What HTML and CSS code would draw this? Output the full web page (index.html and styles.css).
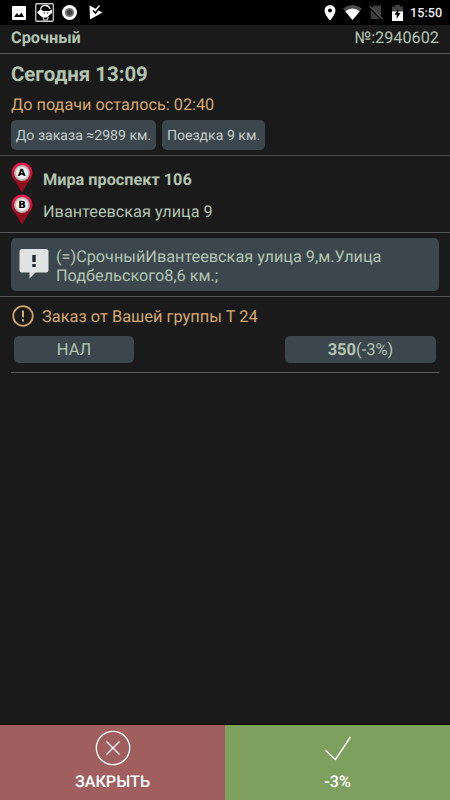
FILE: index.html
```html
<!DOCTYPE html>
<html lang="ru">
<head>
    <meta charset="UTF-8">
    <meta name="viewport" content="width=device-width, initial-scale=1.0">
    <title>Заказ</title>

    <link rel="stylesheet" href="styles.css">
</head>
<body>
    <div class="screen">
        <div class="status-bar">
            <div class="status-left">
                <svg class="icon-image" width="14" height="14" viewBox="0 0 14 14">
                    <rect width="14" height="14" rx="1" fill="#fff"/>
                    <path d="M2 11 L5 7 L7 9.500 L9.500 6.500 L12 11 Z" fill="#000"/>
                </svg>
                <svg class="icon-app" width="19" height="19" viewBox="0 0 19 19">
                    <rect x=".75" y=".75" width="17.500" height="17.500" rx="1" fill="#000" stroke="#ccc" stroke-width="1.300"/>
                    <path d="M2 9.500 L5.500 6 L8 8 H14 L17 6.500 V10 L14.500 12 L12 14.500 L8 14.500 L5.500 13 Z" fill="#fff"/>
                    <path d="M5.500 6 Q7 2 11 2.500 Q14.500 3 15 6" fill="none" stroke="#fff" stroke-width="1.300"/>
                    <path d="M8 14 L9 17 H12 L13.500 14" fill="none" stroke="#ddd" stroke-width="1.200"/>
                    <path d="M8 9.500 L10 9.500 L10 11 Z M12 9.500 H14 L12 11 Z" fill="#222"/>
                </svg>
                <svg class="icon-record" width="15" height="15" viewBox="0 0 15 15">
                    <circle cx="7.500" cy="7.500" r="7.500" fill="#fff"/>
                    <circle cx="7.500" cy="7.500" r="4.600" fill="#777"/>
                    <circle cx="7.500" cy="7.500" r="2.800" fill="#444"/>
                </svg>
                <svg class="icon-play" width="14" height="15" viewBox="0 0 14 15">
                    <path d="M.5 .5 L13.500 7.500 L1 14.500 Z" fill="#fff"/>
                    <path d="M4 5.500 L6.500 8 L11 2" fill="none" stroke="#000" stroke-width="1.500"/>
                    <path d="M7 4.500 L10.500 .5" stroke="#fff" stroke-width="1.300"/>
                </svg>
            </div>
            <div class="status-right">
                <svg class="icon-place" width="12" height="16" viewBox="0 0 12 16">
                    <path d="M6 0 A5.500 5.500 0 0 0 .5 5.500 C.5 9.500 6 15.500 6 15.500 S11.500 9.500 11.500 5.500 A5.500 5.500 0 0 0 6 0 Z M6 3.600 A2 2 0 1 1 6 7.600 A2 2 0 1 1 6 3.600 Z" fill="#fff"/>
                </svg>
                <svg class="icon-wifi" width="19" height="15" viewBox="0 0 19 15">
                    <path d="M9.500 15 L0 3.500 Q9.500 -3.500 19 3.500 Z" fill="#4b4b4b"/>
                    <path d="M9.500 15 L2.200 6.200 Q9.500 1 16.800 6.200 Z" fill="#fff"/>
                </svg>
                <svg class="icon-sim" width="14" height="15" viewBox="0 0 14 15">
                    <path d="M5 .5 H12 V14 H1.800 V4 Z" fill="#404040"/>
                    <path d="M0 2 L13 15" stroke="#000" stroke-width="1.600"/>
                    <path d="M.5 1 L13.500 14" stroke="#555" stroke-width="1.300"/>
                </svg>
                <svg class="icon-battery" width="11" height="16" viewBox="0 0 11 16">
                    <path d="M0 1.500 H3.300 V0 H7.700 V1.500 H11 V16 H0 Z" fill="#444"/>
                    <path d="M0 6.500 H11 V16 H0 Z" fill="#fff"/>
                    <path d="M6.300 4 V8 H8.500 L4.700 14 V9.800 H2.500 Z" fill="#000"/>
                </svg>
                <span class="clock">15:50</span>
            </div>
        </div>

        <div class="header">
            <span class="tariff">Срочный</span>
            <span class="number">№:2940602</span>
        </div>

        <div class="time-block">
            <div class="date">Сегодня 13:09</div>
            <div class="remain">До подачи осталось: 02:40</div>
            <div class="tags">
                <span class="tag tag-order">До заказа ≈2989 км.</span>
                <span class="tag tag-trip">Поездка 9 км.</span>
            </div>
        </div>

        <div class="route">
            <div class="point">
                <svg class="pin" width="22" height="31" viewBox="0 0 22 31">
                    <defs>
                        <linearGradient id="pin-red" x1="0" y1="0" x2="0" y2="1">
                            <stop offset="0" stop-color="#f8124e"/>
                            <stop offset=".45" stop-color="#d00b30"/>
                            <stop offset=".7" stop-color="#8c0b1c"/>
                            <stop offset="1" stop-color="#9c1020"/>
                        </linearGradient>
                        <radialGradient id="pin-ball">
                            <stop offset="0" stop-color="#fff"/>
                            <stop offset=".65" stop-color="#eee"/>
                            <stop offset="1" stop-color="#999"/>
                        </radialGradient>
                    </defs>
                    <path d="M11 .5 A10.500 10.500 0 0 0 .5 11 C.5 16 6 21 11 30.500 C16 21 21.500 16 21.500 11 A10.500 10.500 0 0 0 11 .5 Z" fill="url(#pin-red)"/>
                    <circle cx="11" cy="11" r="8" fill="url(#pin-ball)"/>
                    <text class="pin-letter" x="10.500" y="14.300" text-anchor="middle">A</text>
                </svg>
                <span class="address main">Мира проспект 106</span>
            </div>
            <div class="point">
                <svg class="pin" width="22" height="31" viewBox="0 0 22 31">
                    <path d="M11 .5 A10.500 10.500 0 0 0 .5 11 C.5 16 6 21 11 30.500 C16 21 21.500 16 21.500 11 A10.500 10.500 0 0 0 11 .5 Z" fill="url(#pin-red)"/>
                    <circle cx="11" cy="11" r="8" fill="url(#pin-ball)"/>
                    <text class="pin-letter" x="11" y="14.300" text-anchor="middle">B</text>
                </svg>
                <span class="address">Ивантеевская улица 9</span>
            </div>
        </div>

        <div class="comment-block">
            <div class="comment">
                <svg class="icon-comment" width="30" height="31" viewBox="0 0 30 31">
                    <path d="M3 1 H27 Q29.500 1 29.500 3.500 V22 Q29.500 24.500 27 24.500 H16.500 L10.500 30.500 V24.500 H3 Q.5 24.500 .5 22 V3.500 Q.5 1 3 1 Z" fill="#e0e2e4"/>
                    <path d="M13.300 7 H16.700 V14 H13.300 Z M13.300 16 H16.700 V19 H13.300 Z" fill="#1d2b33"/>
                </svg>
                <p class="comment-text">(=)СрочныйИвантеевская улица 9,м.Улица Подбельского8,6 км.;</p>
            </div>
        </div>

        <div class="payment-block">
            <div class="group">
                <svg class="icon-alert" width="22" height="22" viewBox="0 0 22 22">
                    <circle cx="11" cy="11" r="9.800" fill="none" stroke="#cfa364" stroke-width="1.800"/>
                    <path d="M11 5.500 V12.300 M11 14.300 V16.500" stroke="#d8ab6c" stroke-width="2"/>
                </svg>
                <span class="group-text">Заказ от Вашей группы Т 24</span>
            </div>
            <div class="payment">
                <span class="pay-type">НАЛ</span>
                <span class="price"><b>350</b>(-3%)</span>
            </div>
        </div>

        <div class="buttons">
            <button class="button close">
                <svg class="button-icon" width="36" height="36" viewBox="0 0 36 36">
                    <circle cx="18" cy="18" r="16.700" fill="none" stroke="#fff" stroke-width="1.300"/>
                    <path d="M11.500 11.500 L24.500 24.500 M24.500 11.500 L11.500 24.500" stroke="#fff" stroke-width="1.300"/>
                </svg>
                <span>ЗАКРЫТЬ</span>
            </button>
            <button class="button accept">
                <svg class="button-icon" width="36" height="36" viewBox="0 0 36 36">
                    <path d="M5 20 L15.500 29.500 L30.500 7" fill="none" stroke="#fff" stroke-width="1.400"/>
                </svg>
                <span>-3%</span>
            </button>
        </div>
    </div>
</body>
</html>
```
FILE: styles.css
```css
* {
    margin: 0;
    padding: 0;
    box-sizing: border-box;
}

body {
    font-family: Roboto, "Liberation Sans", sans-serif;
    font-size: 16.250px;
    text-rendering: geometricPrecision;
    background-color: #1a1a1a;
    color: #b2c4b1;
}

svg {
    display: block;
    flex-shrink: 0;
}

.screen {
    width: 450px;
    height: 800px;
    display: flex;
    flex-direction: column;
}

.status-bar {
    height: 25px;
    padding: 0 9px 0 12px;
    background-color: black;
    display: flex;
    justify-content: space-between;
    align-items: center;
}

.status-left {
    display: flex;
    align-items: center;
}

.icon-app {
    margin-left: 9px;
}

.icon-record {
    margin-left: 8px;
}

.icon-play {
    margin-left: 12px;
}

.status-right {
    display: flex;
    align-items: center;
}

.icon-wifi {
    margin-left: 7px;
}

.icon-sim {
    margin-left: 7px;
}

.icon-battery {
    margin-left: 9px;
}

.clock {
    width: 31px;
    margin-left: 7px;
    font-size: 12.700px;
    font-weight: 500;
    line-height: 25px;
    padding-top: 2px;
    color: #eee;
}

.header {
    height: 29px;
    padding: 0 11px;
    border-bottom: 1px solid #585858;
    display: flex;
    justify-content: space-between;
    line-height: 26px;
}

.tariff {
    font-weight: bold;
}

.time-block {
    height: 102px;
    padding: 8px 11px 0;
    border-bottom: 1px solid #4c4c4c;
}

.date {
    font-size: 20.400px;
    font-weight: bold;
    line-height: 25px;
}

.remain {
    margin-top: 7px;
    line-height: 22px;
    color: #d6a86c;
}

.tags {
    display: flex;
    gap: 6px;
    margin-top: 4px;
}

.tag {
    height: 30px;
    border-radius: 5px;
    background-color: #3b474d;
    color: #c5cccb;
    font-size: 14.100px;
    line-height: 33px;
    text-align: center;
    white-space: nowrap;
}

.tag-order {
    width: 145px;
}

.tag-trip {
    width: 103px;
}

.route {
    height: 77px;
    padding: 6px 11px 0;
    border-bottom: 1px solid #585858;
}

.point {
    height: 32px;
    display: flex;
    gap: 10px;
}

.pin-letter {
    font-family: "DejaVu Sans", sans-serif;
    font-size: 10px;
    font-weight: bold;
}

.address {
    line-height: 36px;
}

.main {
    font-weight: bold;
}

.comment-block {
    height: 64px;
    padding: 5px 11px;
    border-bottom: 1px solid #585858;
}

.comment {
    height: 53px;
    padding: 9px 20px 0 8px;
    border-radius: 5px;
    background-color: #3b474d;
    display: flex;
    gap: 7px;
}

.icon-comment {
    margin-top: 1px;
}

.comment-text {
    line-height: 19px;
}

.payment-block {
    height: 76px;
    margin: 0 11px;
    padding: 7px 3px 0 1px;
    border-bottom: 1px solid #585858;
}

.group {
    display: flex;
    align-items: center;
    gap: 8px;
    height: 24px;
    color: #d6a86c;
    font-size: 16.400px;
}

.group-text {
    padding-top: 3px;
    line-height: 24px;
}

.payment {
    display: flex;
    justify-content: space-between;
    margin-top: 8px;
    padding-left: 2px;
    text-align: center;
    font-size: 16.500px;
    line-height: 30px;
}

.pay-type {
    width: 120px;
    height: 27px;
    border-radius: 5px;
    background-color: #3b474d;
}

.price {
    width: 151px;
    height: 27px;
    border-radius: 5px;
    background-color: #3b474d;
}

.buttons {
    height: 76px;
    margin-top: auto;
    border-top: 1px solid #0c0c0c;
    display: flex;
}

.button {
    width: 50%;
    padding-top: 5px;
    border: none;
    color: white;
    font-family: inherit;
    font-size: 16.200px;
    font-weight: 500;
    line-height: 20px;
    text-rendering: inherit;
    display: flex;
    flex-direction: column;
    align-items: center;
    gap: 6px;
}

.close {
    background-color: #a05e5e;
}

.accept {
    background-color: #7da05e;
}
```
